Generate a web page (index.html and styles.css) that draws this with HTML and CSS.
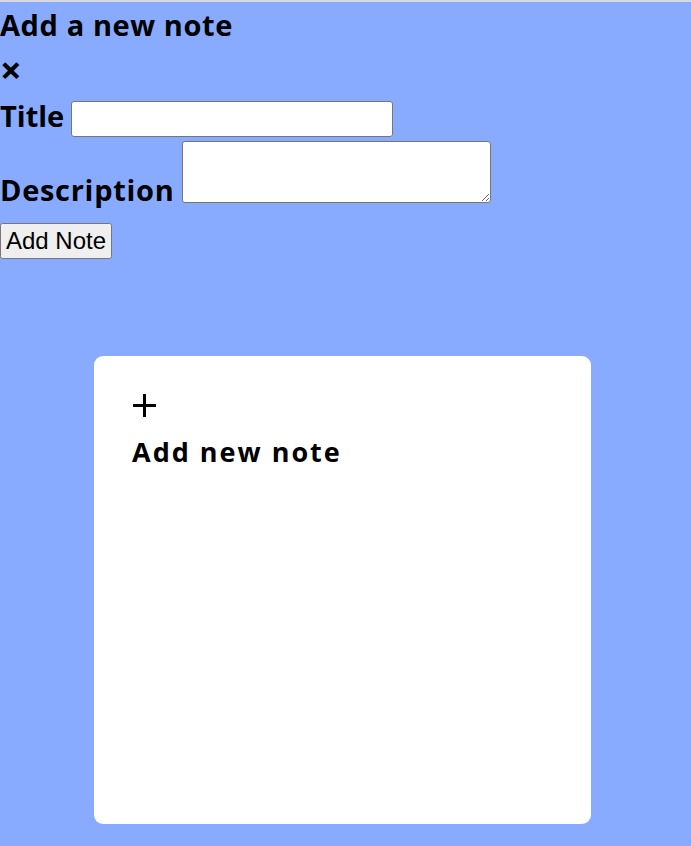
FILE: index.html
```html
<!DOCTYPE html>
<html lang="en">
<head>
    <meta charset="UTF-8">
    <meta name="viewport" content="width=device-width, initial-scale=1.0">
    <title>Notes</title>
    <link rel="stylesheet" href="styles.css">
</head>
<body>
    <div class="popup">
        <h2>Add a new note</h2>
        <div class="close">&times;</div>
        <form>
            <div class="row title-row">
                <label for="title">Title</label>
                <input type="text" id="title">
            </div>
            <div class="row desc-row">
                <label for="desc">Description</label>
                <textarea id="desc"></textarea>
            </div>
            <button type="button">Add Note</button>
        </form>
    </div>

    <div class="wrapper">
        <div class="add-box">
            <svg class="icon" width="25" height="25" viewBox="0 0 25 25">
                <path d="M12.5 1v23M1 12.5h23" stroke="#000" stroke-width="3" fill="none"/>
            </svg>
            <p>Add new note</p>
        </div>
    </div>
</body>
</html>
```

FILE: styles.css
```css
* {
    box-sizing: border-box;
}

body {
    margin: 0;
    font-family: "Open Sans", sans-serif;
    color: #000;
    background: #88abff;
    border-top: 2px solid #d6d9e0;
    height: 100vh;
    overflow: hidden;
}

.popup h2 {
    margin: 0;
    padding-top: 3px;
    font-size: 29px;
    font-weight: 700;
    letter-spacing: 0.6px;
    line-height: 40px;
}

.close {
    margin-top: 4px;
    font-size: 38px;
    font-weight: 700;
    line-height: 40px;
}

.row {
    display: flex;
    font-size: 29px;
    font-weight: 700;
}

.row label {
    line-height: 36px;
}

.title-row {
    margin-top: 12px;
    gap: 7px;
    align-items: center;
}

.title-row label {
    margin-top: -6px;
}

.row input {
    width: 322px;
    height: 36px;
    border: 1px solid #767676;
    border-radius: 3px;
    background: #fff;
}

.desc-row {
    margin-top: 4px;
    gap: 8px;
    align-items: flex-end;
    letter-spacing: 0.7px;
}

.desc-row label {
    margin-bottom: -5px;
}

.row textarea {
    width: 309px;
    height: 62px;
    border: 1px solid #767676;
    border-radius: 3px;
    background: #fff;
}

button {
    display: block;
    margin-top: 20px;
    height: 36px;
    font-family: Arial, "Liberation Sans", sans-serif;
    font-size: 24px;
    padding: 0 4px;
}

.wrapper {
    padding: 97px 0 0 94px;
}

.add-box {
    width: 497px;
    height: 468px;
    background: #fff;
    border-radius: 9px;
    padding: 37px 38px;
}

.add-box .icon {
    display: block;
}

.add-box p {
    margin: 16px 0 0;
    font-size: 27px;
    font-weight: 700;
    letter-spacing: 2px;
    line-height: 36px;
}
```
